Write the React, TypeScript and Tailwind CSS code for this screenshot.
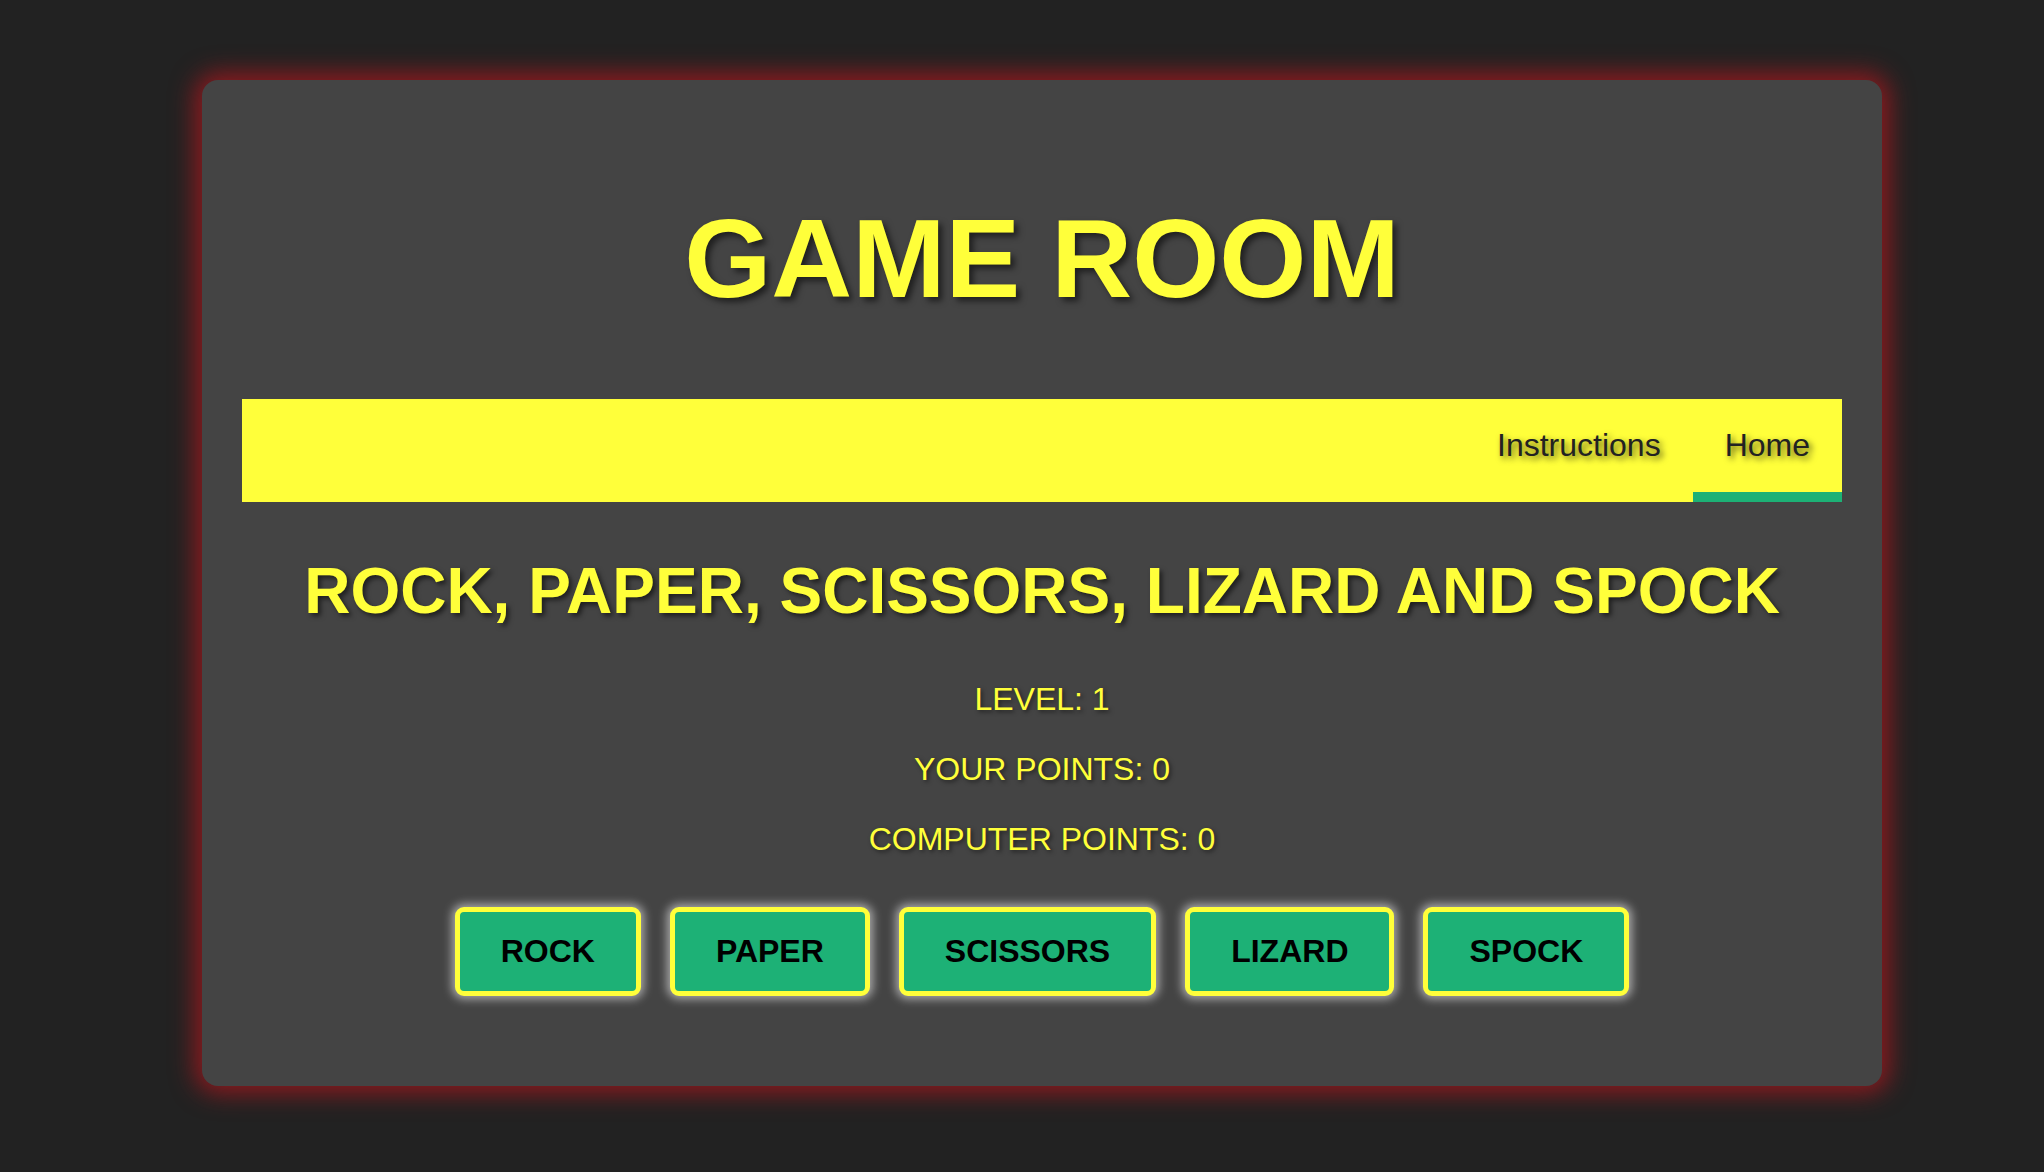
import React from 'react'

const font = { fontFamily: '"Liberation Sans", Arial, sans-serif' }

const choices = ['ROCK', 'PAPER', 'SCISSORS', 'LIZARD', 'SPOCK']

export default function App() {
  return (
    <div style={font} className="min-h-screen bg-[#222222] pt-[80px] pl-[202px] pb-[86px]">
      <div className="w-[1680px] rounded-[16px] bg-[#444444] px-[40px] pt-[114px] pb-[90px] shadow-[0_0_24px_7px_rgba(170,24,30,0.8)]">
        <h1 className="text-center text-[112px] font-bold leading-[129px] text-[#ffff3a] [text-shadow:4px_4px_6px_rgba(0,0,0,0.55)]">
          GAME ROOM
        </h1>

        {/* nav */}
        <nav className="mt-[76px] flex justify-end bg-[#ffff3a]">
          <a className="border-b-[10px] border-transparent px-[32px] pt-[28px] pb-[28px] text-[32px] leading-[37px] text-[#222222] [text-shadow:3px_3px_6px_rgba(0,0,0,0.65)]">
            Instructions
          </a>
          <a className="border-b-[10px] border-[#1db176] px-[32px] pt-[28px] pb-[28px] text-[32px] leading-[37px] text-[#222222] [text-shadow:3px_3px_6px_rgba(0,0,0,0.65)]">
            Home
          </a>
        </nav>

        <h2 className="mt-[52px] text-center text-[64px] font-bold leading-[74px] text-[#ffff3a] [text-shadow:3px_3px_5px_rgba(0,0,0,0.55)]">
          ROCK, PAPER, SCISSORS, LIZARD AND SPOCK
        </h2>

        <div className="mt-[53px] flex flex-col items-center gap-[33px] text-[32px] leading-[37px] text-[#ffff3a] [text-shadow:2px_2px_4px_rgba(0,0,0,0.5)]">
          <p>LEVEL: 1</p>
          <p>YOUR POINTS: 0</p>
          <p>COMPUTER POINTS: 0</p>
        </div>

        <div className="mt-[49px] flex justify-center gap-[29px]">
          {choices.map((c) => (
            <button
              key={c}
              className="rounded-[9px] border-[5px] border-[#ffff3a] bg-[#1db176] px-[41px] py-[21px] text-[32px] font-bold leading-[37px] text-black shadow-[0_0_10px_3px_rgba(255,255,255,0.55)]"
            >
              {c}
            </button>
          ))}
        </div>
      </div>
    </div>
  )
}
